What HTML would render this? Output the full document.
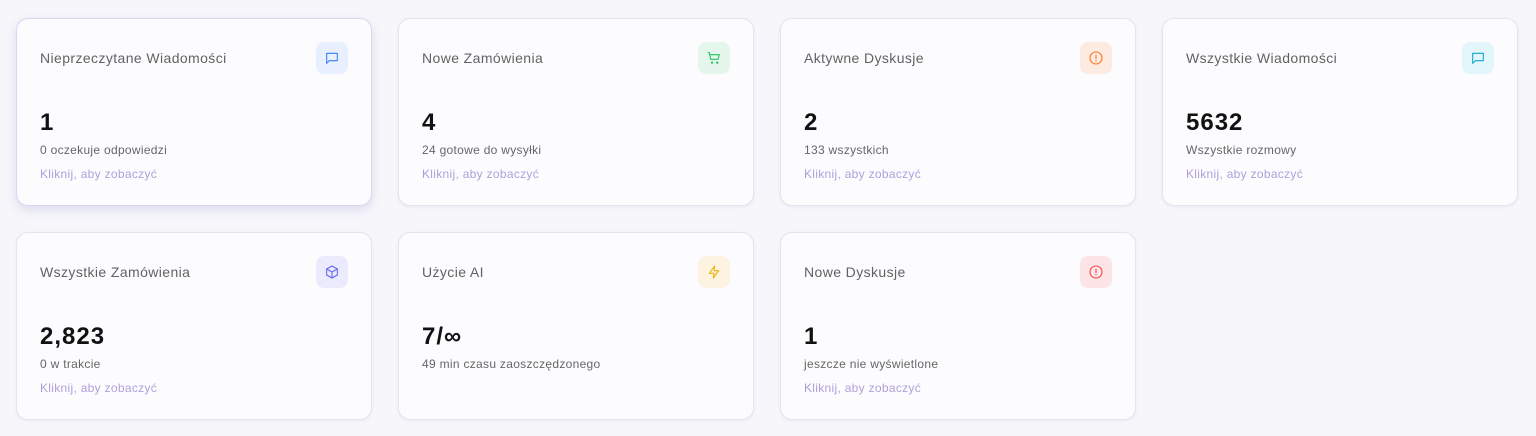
<!DOCTYPE html>
<html><head><meta charset="utf-8"><style>
body{margin:0;width:1536px;height:436px;background:#f6f6fb;font-family:"Liberation Sans",sans-serif;overflow:hidden;position:relative}
.c{position:absolute;width:354px;height:186px;background:#fcfcff;border:1px solid #e4e4ee;border-radius:12px;box-shadow:0 1px 3px rgba(40,40,90,.06)}
.c.h{border-color:#dcd6f2;box-shadow:0 4px 10px rgba(80,70,150,.14)}
.t{position:absolute;left:23px;top:31px;font-size:14px;color:#626262;letter-spacing:.4px}
.i{position:absolute;left:299px;top:23px;width:32px;height:32px;border-radius:8px;display:flex;align-items:center;justify-content:center}
.n{position:absolute;left:23px;top:90px;font-size:24px;font-weight:bold;color:#111;letter-spacing:1px}
.s{position:absolute;left:23px;top:124px;font-size:12px;color:#666;letter-spacing:.3px}
.l{position:absolute;left:23px;top:148px;font-size:12px;color:#ae9fd9;letter-spacing:.3px}
svg{width:16px;height:16px;fill:none;stroke-width:1.6;stroke-linecap:round;stroke-linejoin:round}
</style></head><body>
<div class="c h" style="left:16px;top:18px"><div class="t">Nieprzeczytane Wiadomości</div><div class="i" style="background:#e8f0ff"><svg viewBox="0 0 24 24" stroke="#3b7cf5"><path d="M4 5h16v11H8l-4 4z"/></svg></div><div class="n">1</div><div class="s">0 oczekuje odpowiedzi</div><div class="l">Kliknij, aby zobaczyć</div></div>
<div class="c" style="left:398px;top:18px"><div class="t">Nowe Zamówienia</div><div class="i" style="background:#e5f7ec"><svg viewBox="0 0 24 24" stroke="#22c55e"><path d="M3 4h2l2 10h11l2-7H6"/><circle cx="9" cy="19" r="1"/><circle cx="17" cy="19" r="1"/></svg></div><div class="n">4</div><div class="s">24 gotowe do wysyłki</div><div class="l">Kliknij, aby zobaczyć</div></div>
<div class="c" style="left:780px;top:18px"><div class="t">Aktywne Dyskusje</div><div class="i" style="background:#fdebe2"><svg viewBox="0 0 24 24" stroke="#f97316"><circle cx="12" cy="12" r="9"/><path d="M12 8v5M12 16v.5"/></svg></div><div class="n">2</div><div class="s">133 wszystkich</div><div class="l">Kliknij, aby zobaczyć</div></div>
<div class="c" style="left:1162px;top:18px"><div class="t">Wszystkie Wiadomości</div><div class="i" style="background:#e2f6fb"><svg viewBox="0 0 24 24" stroke="#0ea5c9"><path d="M4 5h16v11H8l-4 4z"/></svg></div><div class="n">5632</div><div class="s">Wszystkie rozmowy</div><div class="l">Kliknij, aby zobaczyć</div></div>
<div class="c" style="left:16px;top:232px"><div class="t">Wszystkie Zamówienia</div><div class="i" style="background:#ebebfd"><svg viewBox="0 0 24 24" stroke="#6366f1"><path d="M12 3l8 4.5v9L12 21l-8-4.5v-9z"/><path d="M4 7.5l8 4.5 8-4.5M12 12v9"/></svg></div><div class="n">2,823</div><div class="s">0 w trakcie</div><div class="l">Kliknij, aby zobaczyć</div></div>
<div class="c" style="left:398px;top:232px"><div class="t">Użycie AI</div><div class="i" style="background:#fcf3e1"><svg viewBox="0 0 24 24" stroke="#eab308"><path d="M13 3L5 14h7l-1 7 8-11h-7z"/></svg></div><div class="n">7/∞</div><div class="s">49 min czasu zaoszczędzonego</div></div>
<div class="c" style="left:780px;top:232px"><div class="t">Nowe Dyskusje</div><div class="i" style="background:#fde5e7"><svg viewBox="0 0 24 24" stroke="#ef4444"><circle cx="12" cy="12" r="9"/><path d="M12 8v5M12 16v.5"/></svg></div><div class="n">1</div><div class="s">jeszcze nie wyświetlone</div><div class="l">Kliknij, aby zobaczyć</div></div>
</body></html>
